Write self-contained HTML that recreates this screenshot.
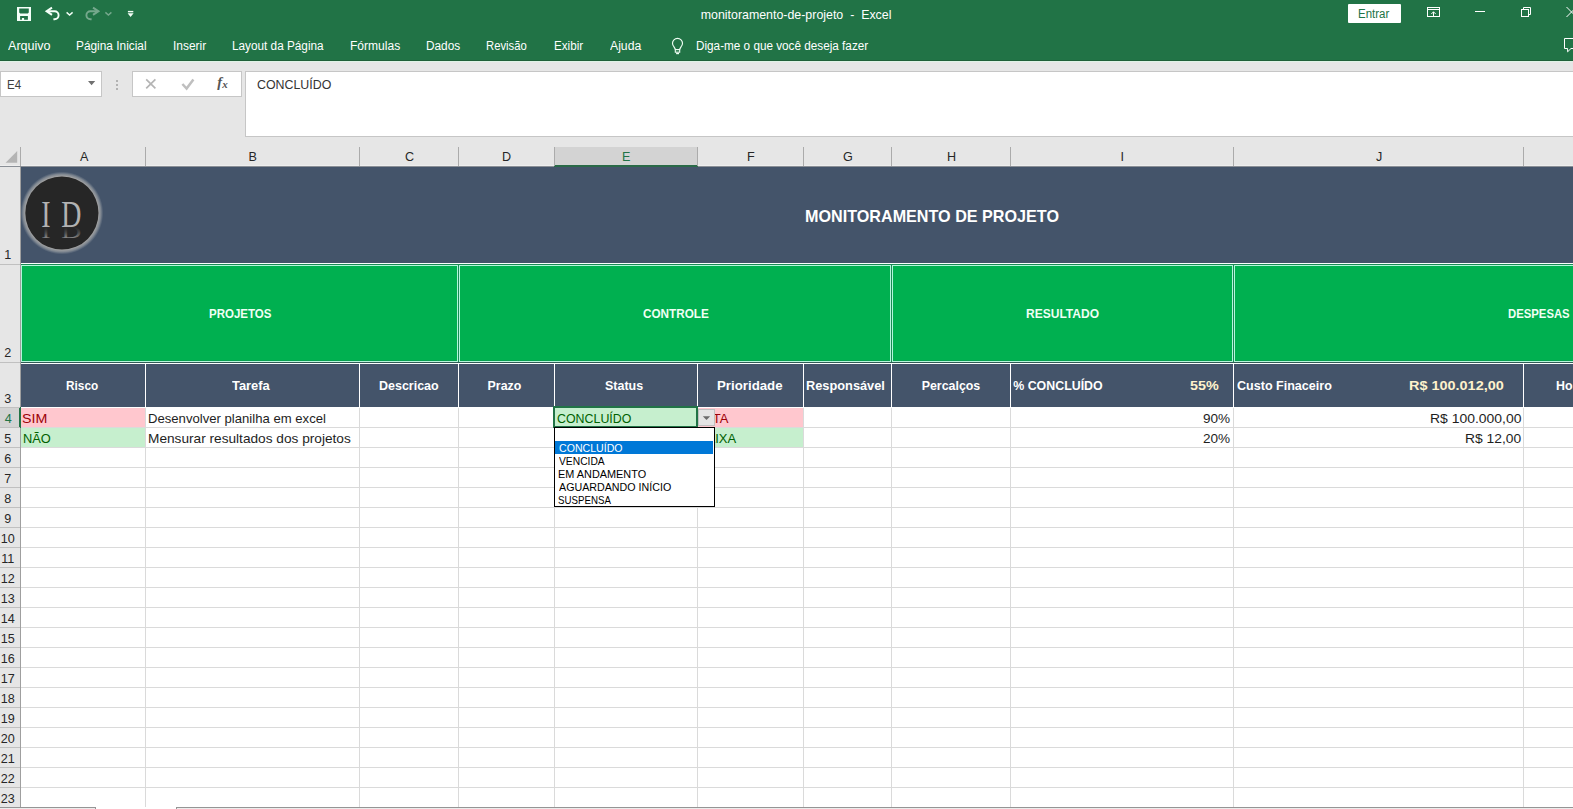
<!DOCTYPE html>
<html><head><meta charset="utf-8"><title>monitoramento-de-projeto - Excel</title>
<style>
html,body{margin:0;padding:0;width:1573px;height:809px;overflow:hidden;background:#fff;font-family:"Liberation Sans", sans-serif;}
body{position:relative;}
</style></head><body>
<div style="position:absolute;left:0px;top:0px;width:1573px;height:60px;background:#217346"></div><div style="position:absolute;left:0px;top:60px;width:1573px;height:1px;background:#1f6039"></div><div style="position:absolute;left:700.70px;top:8.90px;font-family:'Liberation Sans', sans-serif;font-size:12.4px;line-height:1;color:#fff;font-weight:400;font-style:normal;white-space:pre;">monitoramento-de-projeto  -  Excel</div><div style="position:absolute;left:1348px;top:4px;width:53px;height:19px;background:#fff;border-radius:1px"></div><div style="position:absolute;left:1358.44px;top:7.84px;font-family:'Liberation Sans', sans-serif;font-size:12px;line-height:1;color:#217346;font-weight:400;font-style:normal;white-space:pre;transform:scaleX(0.9562);transform-origin:0 0;">Entrar</div><div style="position:absolute;left:8.00px;top:39.79px;font-family:'Liberation Sans', sans-serif;font-size:12.3px;line-height:1;color:#fff;font-weight:400;font-style:normal;white-space:pre;transform:scaleX(1.0220);transform-origin:0 0;">Arquivo</div><div style="position:absolute;left:76.43px;top:39.79px;font-family:'Liberation Sans', sans-serif;font-size:12.3px;line-height:1;color:#fff;font-weight:400;font-style:normal;white-space:pre;transform:scaleX(0.9653);transform-origin:0 0;">Página Inicial</div><div style="position:absolute;left:173.03px;top:39.79px;font-family:'Liberation Sans', sans-serif;font-size:12.3px;line-height:1;color:#fff;font-weight:400;font-style:normal;white-space:pre;transform:scaleX(0.9697);transform-origin:0 0;">Inserir</div><div style="position:absolute;left:232.04px;top:39.79px;font-family:'Liberation Sans', sans-serif;font-size:12.3px;line-height:1;color:#fff;font-weight:400;font-style:normal;white-space:pre;transform:scaleX(0.9568);transform-origin:0 0;">Layout da Página</div><div style="position:absolute;left:350.02px;top:39.79px;font-family:'Liberation Sans', sans-serif;font-size:12.3px;line-height:1;color:#fff;font-weight:400;font-style:normal;white-space:pre;transform:scaleX(0.9800);transform-origin:0 0;">Fórmulas</div><div style="position:absolute;left:426.34px;top:39.79px;font-family:'Liberation Sans', sans-serif;font-size:12.3px;line-height:1;color:#fff;font-weight:400;font-style:normal;white-space:pre;transform:scaleX(0.9618);transform-origin:0 0;">Dados</div><div style="position:absolute;left:486.38px;top:39.79px;font-family:'Liberation Sans', sans-serif;font-size:12.3px;line-height:1;color:#fff;font-weight:400;font-style:normal;white-space:pre;transform:scaleX(0.9163);transform-origin:0 0;">Revisão</div><div style="position:absolute;left:553.55px;top:39.79px;font-family:'Liberation Sans', sans-serif;font-size:12.3px;line-height:1;color:#fff;font-weight:400;font-style:normal;white-space:pre;transform:scaleX(0.9467);transform-origin:0 0;">Exibir</div><div style="position:absolute;left:610.00px;top:39.79px;font-family:'Liberation Sans', sans-serif;font-size:12.3px;line-height:1;color:#fff;font-weight:400;font-style:normal;white-space:pre;transform:scaleX(0.9935);transform-origin:0 0;">Ajuda</div><div style="position:absolute;left:696.25px;top:39.79px;font-family:'Liberation Sans', sans-serif;font-size:12.3px;line-height:1;color:#fff;font-weight:400;font-style:normal;white-space:pre;transform:scaleX(0.9542);transform-origin:0 0;">Diga-me o que você deseja fazer</div><svg style="position:absolute;left:0;top:0" width="1573" height="60" viewBox="0 0 1573 60">
<path fill="#f4fff8" fill-rule="evenodd" d="M17 7 H31 V21 H17 Z M19.2 8.4 H28.8 V12.6 L27.8 13.6 H20.2 L19.2 12.6 Z M20.1 16 H27.9 V19.8 H24.1 V18 H21.9 V19.8 H20.1 Z"/>
<path d="M52 7.6 L46.6 11.2 L52 14.8" fill="none" stroke="#f4fff8" stroke-width="2" stroke-linejoin="miter"/>
<path d="M47.5 11.2 H54.6 A4 4 0 0 1 54.6 19.2 H53.4" fill="none" stroke="#f4fff8" stroke-width="1.9"/>
<path d="M66.6 12.4 L69.6 15 L72.6 12.4" fill="none" stroke="#f4fff8" stroke-width="1.4"/>
<g opacity="0.38">
<path d="M93 7.6 L98.4 11.2 L93 14.8" fill="none" stroke="#fff" stroke-width="2"/>
<path d="M97.5 11.2 H90.4 A4 4 0 0 0 90.4 19.2 H91.6" fill="none" stroke="#fff" stroke-width="1.9"/>
<path d="M105.4 12.4 L108.4 15 L111.4 12.4" fill="none" stroke="#fff" stroke-width="1.4"/>
</g>
<rect x="127.9" y="10.9" width="5.4" height="1.4" fill="#f4fff8"/>
<path d="M127.6 13.2 H133.6 L130.6 17 Z" fill="#f4fff8"/>
<rect x="1427.5" y="7.5" width="12" height="9" fill="none" stroke="#fff" stroke-width="1"/>
<path d="M1427.5 9.5 H1439.5" stroke="#fff" stroke-width="1"/>
<path d="M1433.5 16.5 V11.8 M1431.3 14 L1433.5 11.8 L1435.7 14" stroke="#fff" stroke-width="1" fill="none"/>
<path d="M1475 11.5 H1485" stroke="#fff" stroke-width="1"/>
<rect x="1521.5" y="9.5" width="7" height="7" fill="none" stroke="#fff" stroke-width="1"/>
<path d="M1523.5 9.5 V7.5 H1530.5 V14.5 H1528.5" fill="none" stroke="#fff" stroke-width="1"/>
<path d="M1566.5 7 L1576.5 17 M1576.5 7 L1566.5 17" stroke="#fff" stroke-width="1"/>
<path d="M1564.5 38.5 H1580 V48.5 H1571 L1567.6 51.8 V48.5 H1564.5 Z" fill="none" stroke="#fff" stroke-width="1"/>
<path d="M675.4 49.4 L674 46.9 A5 5 0 1 1 681 46.9 L679.6 49.4" fill="none" stroke="#f0fff5" stroke-width="1.15"/>
<rect x="675.3" y="49.6" width="4.4" height="2.6" fill="none" stroke="#f0fff5" stroke-width="1.1"/>
<rect x="676.1" y="53" width="2.9" height="1.2" fill="#f0fff5"/>
</svg><div style="position:absolute;left:0px;top:61px;width:1573px;height:106px;background:#e6e6e6"></div><div style="position:absolute;left:0px;top:61px;width:1573px;height:1px;background:#dff3e6"></div><div style="position:absolute;left:0px;top:71px;width:102px;height:26px;background:#fff;border:1px solid #c6c6c6;box-sizing:border-box"></div><div style="position:absolute;left:6.78px;top:78.62px;font-family:'Liberation Sans', sans-serif;font-size:12.5px;line-height:1;color:#404040;font-weight:400;font-style:normal;white-space:pre;transform:scaleX(0.9214);transform-origin:0 0;">E4</div><svg style="position:absolute;left:86px;top:80px" width="12" height="8"><path d="M2 1 H9.2 L5.6 5.2 Z" fill="#707070"/></svg><div style="position:absolute;left:116px;top:79.5px;width:2px;height:2px;background:#a0a0a0;border-radius:1px"></div><div style="position:absolute;left:116px;top:83.5px;width:2px;height:2px;background:#a0a0a0;border-radius:1px"></div><div style="position:absolute;left:116px;top:87.5px;width:2px;height:2px;background:#a0a0a0;border-radius:1px"></div><div style="position:absolute;left:132px;top:71px;width:110px;height:26px;background:#fff;border:1px solid #c6c6c6;box-sizing:border-box"></div><svg style="position:absolute;left:132px;top:71px" width="110" height="26"><path d="M14.2 8.4 L23.4 17.4 M23.4 8.4 L14.2 17.4" stroke="#b4b4b4" stroke-width="1.7" fill="none"/><path d="M50.4 13 L54.6 17.6 L61.4 8.4" stroke="#bfbfbf" stroke-width="2.5" fill="none"/></svg><div style="position:absolute;left:217.20px;top:75.33px;font-family:'Liberation Serif', serif;font-size:14.5px;line-height:1;color:#555;font-weight:400;font-style:italic;white-space:pre;"><b>f</b></div><div style="position:absolute;left:222.20px;top:78.69px;font-family:'Liberation Serif', serif;font-size:11px;line-height:1;color:#555;font-weight:400;font-style:italic;white-space:pre;"><b>x</b></div><div style="position:absolute;left:245px;top:71px;width:1330px;height:66px;background:#fff;border:1px solid #c6c6c6;box-sizing:border-box"></div><div style="position:absolute;left:256.58px;top:78.67px;font-family:'Liberation Sans', sans-serif;font-size:12.2px;line-height:1;color:#333;font-weight:400;font-style:normal;white-space:pre;transform:scaleX(1.0167);transform-origin:0 0;">CONCLUÍDO</div><svg style="position:absolute;left:0;top:140px" width="21" height="27"><path d="M5.6 22.7 L17.2 11 V22.7 Z" fill="#b4b4b4"/></svg><div style="position:absolute;left:0px;top:165px;width:1573px;height:1px;background:#eeeeee"></div><div style="position:absolute;left:0px;top:166px;width:1573px;height:1px;background:#8a8f96"></div><div style="position:absolute;left:554px;top:147px;width:144px;height:19px;background:#d3d3d3"></div><div style="position:absolute;left:554px;top:165px;width:144px;height:2px;background:#2a6a48"></div><div style="position:absolute;left:80.00px;top:151.03px;font-family:'Liberation Sans', sans-serif;font-size:12.6px;line-height:1;color:#262626;font-weight:400;font-style:normal;white-space:pre;">A</div><div style="position:absolute;left:248.50px;top:151.03px;font-family:'Liberation Sans', sans-serif;font-size:12.6px;line-height:1;color:#262626;font-weight:400;font-style:normal;white-space:pre;">B</div><div style="position:absolute;left:405.00px;top:151.03px;font-family:'Liberation Sans', sans-serif;font-size:12.6px;line-height:1;color:#262626;font-weight:400;font-style:normal;white-space:pre;">C</div><div style="position:absolute;left:502.00px;top:151.03px;font-family:'Liberation Sans', sans-serif;font-size:12.6px;line-height:1;color:#262626;font-weight:400;font-style:normal;white-space:pre;">D</div><div style="position:absolute;left:622.00px;top:151.03px;font-family:'Liberation Sans', sans-serif;font-size:12.6px;line-height:1;color:#217346;font-weight:400;font-style:normal;white-space:pre;">E</div><div style="position:absolute;left:747.00px;top:151.03px;font-family:'Liberation Sans', sans-serif;font-size:12.6px;line-height:1;color:#262626;font-weight:400;font-style:normal;white-space:pre;">F</div><div style="position:absolute;left:843.00px;top:151.03px;font-family:'Liberation Sans', sans-serif;font-size:12.6px;line-height:1;color:#262626;font-weight:400;font-style:normal;white-space:pre;">G</div><div style="position:absolute;left:947.00px;top:151.03px;font-family:'Liberation Sans', sans-serif;font-size:12.6px;line-height:1;color:#262626;font-weight:400;font-style:normal;white-space:pre;">H</div><div style="position:absolute;left:1120.50px;top:151.03px;font-family:'Liberation Sans', sans-serif;font-size:12.6px;line-height:1;color:#262626;font-weight:400;font-style:normal;white-space:pre;">I</div><div style="position:absolute;left:1376.00px;top:151.03px;font-family:'Liberation Sans', sans-serif;font-size:12.6px;line-height:1;color:#262626;font-weight:400;font-style:normal;white-space:pre;">J</div><div style="position:absolute;left:1608.00px;top:151.03px;font-family:'Liberation Sans', sans-serif;font-size:12.6px;line-height:1;color:#262626;font-weight:400;font-style:normal;white-space:pre;">K</div><div style="position:absolute;left:145px;top:147px;width:1px;height:19px;background:#ababab"></div><div style="position:absolute;left:359px;top:147px;width:1px;height:19px;background:#ababab"></div><div style="position:absolute;left:458px;top:147px;width:1px;height:19px;background:#ababab"></div><div style="position:absolute;left:554px;top:147px;width:1px;height:19px;background:#ababab"></div><div style="position:absolute;left:697px;top:147px;width:1px;height:19px;background:#ababab"></div><div style="position:absolute;left:803px;top:147px;width:1px;height:19px;background:#ababab"></div><div style="position:absolute;left:891px;top:147px;width:1px;height:19px;background:#ababab"></div><div style="position:absolute;left:1010px;top:147px;width:1px;height:19px;background:#ababab"></div><div style="position:absolute;left:1233px;top:147px;width:1px;height:19px;background:#ababab"></div><div style="position:absolute;left:1523px;top:147px;width:1px;height:19px;background:#ababab"></div><div style="position:absolute;left:20px;top:147px;width:1px;height:19px;background:#ababab"></div><div style="position:absolute;left:0px;top:167px;width:20px;height:640px;background:#e6e6e6"></div><div style="position:absolute;left:20px;top:167px;width:1px;height:640px;background:#9f9f9f"></div><div style="position:absolute;left:0px;top:408px;width:19px;height:19px;background:#d3d3d3"></div><div style="position:absolute;left:19px;top:407px;width:2px;height:21px;background:#217346"></div><div style="position:absolute;left:0px;top:264px;width:20px;height:1px;background:#c0c0c0"></div><div style="position:absolute;left:4.30px;top:249.13px;font-family:'Liberation Sans', sans-serif;font-size:12.6px;line-height:1;color:#262626;font-weight:400;font-style:normal;white-space:pre;">1</div><div style="position:absolute;left:0px;top:362px;width:20px;height:1px;background:#c0c0c0"></div><div style="position:absolute;left:4.30px;top:347.13px;font-family:'Liberation Sans', sans-serif;font-size:12.6px;line-height:1;color:#262626;font-weight:400;font-style:normal;white-space:pre;">2</div><div style="position:absolute;left:0px;top:407px;width:20px;height:1px;background:#c0c0c0"></div><div style="position:absolute;left:4.30px;top:393.13px;font-family:'Liberation Sans', sans-serif;font-size:12.6px;line-height:1;color:#262626;font-weight:400;font-style:normal;white-space:pre;">3</div><div style="position:absolute;left:0px;top:427px;width:20px;height:1px;background:#c0c0c0"></div><div style="position:absolute;left:4.80px;top:413.13px;font-family:'Liberation Sans', sans-serif;font-size:12.6px;line-height:1;color:#217346;font-weight:400;font-style:normal;white-space:pre;">4</div><div style="position:absolute;left:0px;top:447px;width:20px;height:1px;background:#c0c0c0"></div><div style="position:absolute;left:4.30px;top:433.13px;font-family:'Liberation Sans', sans-serif;font-size:12.6px;line-height:1;color:#262626;font-weight:400;font-style:normal;white-space:pre;">5</div><div style="position:absolute;left:0px;top:467px;width:20px;height:1px;background:#c0c0c0"></div><div style="position:absolute;left:4.30px;top:453.13px;font-family:'Liberation Sans', sans-serif;font-size:12.6px;line-height:1;color:#262626;font-weight:400;font-style:normal;white-space:pre;">6</div><div style="position:absolute;left:0px;top:487px;width:20px;height:1px;background:#c0c0c0"></div><div style="position:absolute;left:4.30px;top:473.13px;font-family:'Liberation Sans', sans-serif;font-size:12.6px;line-height:1;color:#262626;font-weight:400;font-style:normal;white-space:pre;">7</div><div style="position:absolute;left:0px;top:507px;width:20px;height:1px;background:#c0c0c0"></div><div style="position:absolute;left:4.30px;top:493.13px;font-family:'Liberation Sans', sans-serif;font-size:12.6px;line-height:1;color:#262626;font-weight:400;font-style:normal;white-space:pre;">8</div><div style="position:absolute;left:0px;top:527px;width:20px;height:1px;background:#c0c0c0"></div><div style="position:absolute;left:4.30px;top:513.13px;font-family:'Liberation Sans', sans-serif;font-size:12.6px;line-height:1;color:#262626;font-weight:400;font-style:normal;white-space:pre;">9</div><div style="position:absolute;left:0px;top:547px;width:20px;height:1px;background:#c0c0c0"></div><div style="position:absolute;left:0.80px;top:533.13px;font-family:'Liberation Sans', sans-serif;font-size:12.6px;line-height:1;color:#262626;font-weight:400;font-style:normal;white-space:pre;">10</div><div style="position:absolute;left:0px;top:567px;width:20px;height:1px;background:#c0c0c0"></div><div style="position:absolute;left:1.30px;top:553.13px;font-family:'Liberation Sans', sans-serif;font-size:12.6px;line-height:1;color:#262626;font-weight:400;font-style:normal;white-space:pre;">11</div><div style="position:absolute;left:0px;top:587px;width:20px;height:1px;background:#c0c0c0"></div><div style="position:absolute;left:0.80px;top:573.13px;font-family:'Liberation Sans', sans-serif;font-size:12.6px;line-height:1;color:#262626;font-weight:400;font-style:normal;white-space:pre;">12</div><div style="position:absolute;left:0px;top:607px;width:20px;height:1px;background:#c0c0c0"></div><div style="position:absolute;left:0.80px;top:593.13px;font-family:'Liberation Sans', sans-serif;font-size:12.6px;line-height:1;color:#262626;font-weight:400;font-style:normal;white-space:pre;">13</div><div style="position:absolute;left:0px;top:627px;width:20px;height:1px;background:#c0c0c0"></div><div style="position:absolute;left:0.80px;top:613.13px;font-family:'Liberation Sans', sans-serif;font-size:12.6px;line-height:1;color:#262626;font-weight:400;font-style:normal;white-space:pre;">14</div><div style="position:absolute;left:0px;top:647px;width:20px;height:1px;background:#c0c0c0"></div><div style="position:absolute;left:0.80px;top:633.13px;font-family:'Liberation Sans', sans-serif;font-size:12.6px;line-height:1;color:#262626;font-weight:400;font-style:normal;white-space:pre;">15</div><div style="position:absolute;left:0px;top:667px;width:20px;height:1px;background:#c0c0c0"></div><div style="position:absolute;left:0.80px;top:653.13px;font-family:'Liberation Sans', sans-serif;font-size:12.6px;line-height:1;color:#262626;font-weight:400;font-style:normal;white-space:pre;">16</div><div style="position:absolute;left:0px;top:687px;width:20px;height:1px;background:#c0c0c0"></div><div style="position:absolute;left:0.80px;top:673.13px;font-family:'Liberation Sans', sans-serif;font-size:12.6px;line-height:1;color:#262626;font-weight:400;font-style:normal;white-space:pre;">17</div><div style="position:absolute;left:0px;top:707px;width:20px;height:1px;background:#c0c0c0"></div><div style="position:absolute;left:0.80px;top:693.13px;font-family:'Liberation Sans', sans-serif;font-size:12.6px;line-height:1;color:#262626;font-weight:400;font-style:normal;white-space:pre;">18</div><div style="position:absolute;left:0px;top:727px;width:20px;height:1px;background:#c0c0c0"></div><div style="position:absolute;left:0.80px;top:713.13px;font-family:'Liberation Sans', sans-serif;font-size:12.6px;line-height:1;color:#262626;font-weight:400;font-style:normal;white-space:pre;">19</div><div style="position:absolute;left:0px;top:747px;width:20px;height:1px;background:#c0c0c0"></div><div style="position:absolute;left:0.80px;top:733.13px;font-family:'Liberation Sans', sans-serif;font-size:12.6px;line-height:1;color:#262626;font-weight:400;font-style:normal;white-space:pre;">20</div><div style="position:absolute;left:0px;top:767px;width:20px;height:1px;background:#c0c0c0"></div><div style="position:absolute;left:0.80px;top:753.13px;font-family:'Liberation Sans', sans-serif;font-size:12.6px;line-height:1;color:#262626;font-weight:400;font-style:normal;white-space:pre;">21</div><div style="position:absolute;left:0px;top:787px;width:20px;height:1px;background:#c0c0c0"></div><div style="position:absolute;left:0.80px;top:773.13px;font-family:'Liberation Sans', sans-serif;font-size:12.6px;line-height:1;color:#262626;font-weight:400;font-style:normal;white-space:pre;">22</div><div style="position:absolute;left:0px;top:807px;width:20px;height:1px;background:#c0c0c0"></div><div style="position:absolute;left:0.80px;top:793.13px;font-family:'Liberation Sans', sans-serif;font-size:12.6px;line-height:1;color:#262626;font-weight:400;font-style:normal;white-space:pre;">23</div><div style="position:absolute;left:21px;top:167px;width:1552px;height:640px;background:#fff"></div><div style="position:absolute;left:21px;top:427px;width:1552px;height:1px;background:#dadada"></div><div style="position:absolute;left:21px;top:447px;width:1552px;height:1px;background:#dadada"></div><div style="position:absolute;left:21px;top:467px;width:1552px;height:1px;background:#dadada"></div><div style="position:absolute;left:21px;top:487px;width:1552px;height:1px;background:#dadada"></div><div style="position:absolute;left:21px;top:507px;width:1552px;height:1px;background:#dadada"></div><div style="position:absolute;left:21px;top:527px;width:1552px;height:1px;background:#dadada"></div><div style="position:absolute;left:21px;top:547px;width:1552px;height:1px;background:#dadada"></div><div style="position:absolute;left:21px;top:567px;width:1552px;height:1px;background:#dadada"></div><div style="position:absolute;left:21px;top:587px;width:1552px;height:1px;background:#dadada"></div><div style="position:absolute;left:21px;top:607px;width:1552px;height:1px;background:#dadada"></div><div style="position:absolute;left:21px;top:627px;width:1552px;height:1px;background:#dadada"></div><div style="position:absolute;left:21px;top:647px;width:1552px;height:1px;background:#dadada"></div><div style="position:absolute;left:21px;top:667px;width:1552px;height:1px;background:#dadada"></div><div style="position:absolute;left:21px;top:687px;width:1552px;height:1px;background:#dadada"></div><div style="position:absolute;left:21px;top:707px;width:1552px;height:1px;background:#dadada"></div><div style="position:absolute;left:21px;top:727px;width:1552px;height:1px;background:#dadada"></div><div style="position:absolute;left:21px;top:747px;width:1552px;height:1px;background:#dadada"></div><div style="position:absolute;left:21px;top:767px;width:1552px;height:1px;background:#dadada"></div><div style="position:absolute;left:21px;top:787px;width:1552px;height:1px;background:#dadada"></div><div style="position:absolute;left:21px;top:807px;width:1552px;height:1px;background:#dadada"></div><div style="position:absolute;left:145px;top:407px;width:1px;height:400px;background:#dadada"></div><div style="position:absolute;left:359px;top:407px;width:1px;height:400px;background:#dadada"></div><div style="position:absolute;left:458px;top:407px;width:1px;height:400px;background:#dadada"></div><div style="position:absolute;left:554px;top:407px;width:1px;height:400px;background:#dadada"></div><div style="position:absolute;left:697px;top:407px;width:1px;height:400px;background:#dadada"></div><div style="position:absolute;left:803px;top:407px;width:1px;height:400px;background:#dadada"></div><div style="position:absolute;left:891px;top:407px;width:1px;height:400px;background:#dadada"></div><div style="position:absolute;left:1010px;top:407px;width:1px;height:400px;background:#dadada"></div><div style="position:absolute;left:1233px;top:407px;width:1px;height:400px;background:#dadada"></div><div style="position:absolute;left:1523px;top:407px;width:1px;height:400px;background:#dadada"></div><div style="position:absolute;left:21px;top:167px;width:1552px;height:96px;background:#44546a"></div><div style="position:absolute;left:804.75px;top:207.81px;font-family:'Liberation Sans', sans-serif;font-size:17px;line-height:1;color:#fff;font-weight:700;font-style:normal;white-space:pre;transform:scaleX(0.9500);transform-origin:0 0;">MONITORAMENTO DE PROJETO</div><svg style="position:absolute;left:21px;top:167px" width="84" height="96">
<defs>
<radialGradient id="glow" cx="50%" cy="50%" r="50%">
<stop offset="88%" stop-color="#a4a4a4" stop-opacity="1"/>
<stop offset="94%" stop-color="#90969c" stop-opacity="0.75"/>
<stop offset="100%" stop-color="#7a8593" stop-opacity="0"/></radialGradient>
<linearGradient id="refl" x1="0" y1="0" x2="0" y2="1"><stop offset="0" stop-color="#b0b0b0"/><stop offset="0.9" stop-color="#262626" stop-opacity="0"/></linearGradient>
</defs>
<circle cx="40.9" cy="46" r="41.5" fill="url(#glow)"/>
<circle cx="40.9" cy="46" r="36.6" fill="#262626"/>
<g transform="translate(0,59.5) scale(0.745,1)">
<text x="27.2" y="0" font-family="Liberation Serif" font-size="37.5" fill="#b2b2b2">I</text>
<text x="54.2" y="0" font-family="Liberation Serif" font-size="37.5" fill="#b2b2b2">D</text>
</g>
<g transform="translate(0,59.5) scale(0.745,-0.42)">
<text x="27.2" y="0" font-family="Liberation Serif" font-size="37.5" fill="url(#refl)">I</text>
<text x="54.2" y="0" font-family="Liberation Serif" font-size="37.5" fill="url(#refl)">D</text>
</g>
</svg><div style="position:absolute;left:21px;top:263px;width:1552px;height:101px;background:#fbfffd"></div><div style="position:absolute;left:21px;top:264px;width:438px;height:99px;background:#1b8a55"></div><div style="position:absolute;left:21px;top:265px;width:437px;height:97px;background:#b4f6dc"></div><div style="position:absolute;left:22px;top:266px;width:435px;height:95px;background:#00b050"></div><div style="position:absolute;left:22px;top:360px;width:435px;height:1px;background:#06a04e"></div><div style="position:absolute;left:208.76px;top:307.57px;font-family:'Liberation Sans', sans-serif;font-size:12.2px;line-height:1;color:#effff4;font-weight:700;font-style:normal;white-space:pre;transform:scaleX(0.9446);transform-origin:0 0;">PROJETOS</div><div style="position:absolute;left:458px;top:264px;width:434px;height:99px;background:#1b8a55"></div><div style="position:absolute;left:459px;top:265px;width:432px;height:97px;background:#b4f6dc"></div><div style="position:absolute;left:460px;top:266px;width:430px;height:95px;background:#00b050"></div><div style="position:absolute;left:460px;top:360px;width:430px;height:1px;background:#06a04e"></div><div style="position:absolute;left:642.60px;top:307.57px;font-family:'Liberation Sans', sans-serif;font-size:12.2px;line-height:1;color:#effff4;font-weight:700;font-style:normal;white-space:pre;transform:scaleX(0.9618);transform-origin:0 0;">CONTROLE</div><div style="position:absolute;left:891px;top:264px;width:343px;height:99px;background:#1b8a55"></div><div style="position:absolute;left:892px;top:265px;width:341px;height:97px;background:#b4f6dc"></div><div style="position:absolute;left:893px;top:266px;width:339px;height:95px;background:#00b050"></div><div style="position:absolute;left:893px;top:360px;width:339px;height:1px;background:#06a04e"></div><div style="position:absolute;left:1025.71px;top:307.57px;font-family:'Liberation Sans', sans-serif;font-size:12.2px;line-height:1;color:#effff4;font-weight:700;font-style:normal;white-space:pre;transform:scaleX(0.9863);transform-origin:0 0;">RESULTADO</div><div style="position:absolute;left:1233px;top:264px;width:611px;height:99px;background:#1b8a55"></div><div style="position:absolute;left:1234px;top:265px;width:609px;height:97px;background:#b4f6dc"></div><div style="position:absolute;left:1235px;top:266px;width:607px;height:95px;background:#00b050"></div><div style="position:absolute;left:1235px;top:360px;width:607px;height:1px;background:#06a04e"></div><div style="position:absolute;left:1507.67px;top:307.57px;font-family:'Liberation Sans', sans-serif;font-size:12.2px;line-height:1;color:#effff4;font-weight:700;font-style:normal;white-space:pre;transform:scaleX(0.9292);transform-origin:0 0;">DESPESAS</div><div style="position:absolute;left:21px;top:362px;width:1552px;height:1px;background:#2f5a55"></div><div style="position:absolute;left:21px;top:363px;width:1552px;height:1px;background:#fbfffd"></div><div style="position:absolute;left:21px;top:364px;width:1552px;height:43px;background:#44546a"></div><div style="position:absolute;left:145px;top:363px;width:1px;height:44px;background:#fff"></div><div style="position:absolute;left:359px;top:363px;width:1px;height:44px;background:#fff"></div><div style="position:absolute;left:458px;top:363px;width:1px;height:44px;background:#fff"></div><div style="position:absolute;left:554px;top:363px;width:1px;height:44px;background:#fff"></div><div style="position:absolute;left:697px;top:363px;width:1px;height:44px;background:#fff"></div><div style="position:absolute;left:803px;top:363px;width:1px;height:44px;background:#fff"></div><div style="position:absolute;left:891px;top:363px;width:1px;height:44px;background:#fff"></div><div style="position:absolute;left:1010px;top:363px;width:1px;height:44px;background:#fff"></div><div style="position:absolute;left:1233px;top:363px;width:1px;height:44px;background:#fff"></div><div style="position:absolute;left:1523px;top:363px;width:1px;height:44px;background:#fff"></div><div style="position:absolute;left:21px;top:407px;width:1552px;height:1px;background:#fff"></div><div style="position:absolute;left:66.45px;top:379.60px;font-family:'Liberation Sans', sans-serif;font-size:12.4px;line-height:1;color:#fff;font-weight:700;font-style:normal;white-space:pre;transform:scaleX(0.9545);transform-origin:0 0;">Risco</div><div style="position:absolute;left:232.10px;top:379.60px;font-family:'Liberation Sans', sans-serif;font-size:12.4px;line-height:1;color:#fff;font-weight:700;font-style:normal;white-space:pre;transform:scaleX(1.0405);transform-origin:0 0;">Tarefa</div><div style="position:absolute;left:379.49px;top:379.60px;font-family:'Liberation Sans', sans-serif;font-size:12.4px;line-height:1;color:#fff;font-weight:700;font-style:normal;white-space:pre;transform:scaleX(1.0069);transform-origin:0 0;">Descricao</div><div style="position:absolute;left:487.60px;top:379.60px;font-family:'Liberation Sans', sans-serif;font-size:12.4px;line-height:1;color:#fff;font-weight:700;font-style:normal;white-space:pre;">Prazo</div><div style="position:absolute;left:605.39px;top:379.60px;font-family:'Liberation Sans', sans-serif;font-size:12.4px;line-height:1;color:#fff;font-weight:700;font-style:normal;white-space:pre;transform:scaleX(1.0054);transform-origin:0 0;">Status</div><div style="position:absolute;left:717.33px;top:379.60px;font-family:'Liberation Sans', sans-serif;font-size:12.4px;line-height:1;color:#fff;font-weight:700;font-style:normal;white-space:pre;transform:scaleX(1.0700);transform-origin:0 0;">Prioridade</div><div style="position:absolute;left:806.37px;top:379.60px;font-family:'Liberation Sans', sans-serif;font-size:12.4px;line-height:1;color:#fff;font-weight:700;font-style:normal;white-space:pre;transform:scaleX(1.0320);transform-origin:0 0;">Responsável</div><div style="position:absolute;left:921.70px;top:379.60px;font-family:'Liberation Sans', sans-serif;font-size:12.4px;line-height:1;color:#fff;font-weight:700;font-style:normal;white-space:pre;">Percalços</div><div style="position:absolute;left:1013.20px;top:379.60px;font-family:'Liberation Sans', sans-serif;font-size:12.4px;line-height:1;color:#fff;font-weight:700;font-style:normal;white-space:pre;">% CONCLUÍDO</div><div style="position:absolute;left:1236.50px;top:379.60px;font-family:'Liberation Sans', sans-serif;font-size:12.4px;line-height:1;color:#fff;font-weight:700;font-style:normal;white-space:pre;transform:scaleX(1.0129);transform-origin:0 0;">Custo Finaceiro</div><div style="position:absolute;left:1189.61px;top:378.93px;font-family:'Liberation Sans', sans-serif;font-size:13.2px;line-height:1;color:#fff2cc;font-weight:700;font-style:normal;white-space:pre;transform:scaleX(1.0880);transform-origin:0 0;">55%</div><div style="position:absolute;left:1408.80px;top:379.03px;font-family:'Liberation Sans', sans-serif;font-size:13.2px;line-height:1;color:#fff2cc;font-weight:700;font-style:normal;white-space:pre;transform:scaleX(1.0953);transform-origin:0 0;">R$ 100.012,00</div><div style="position:absolute;left:1556.00px;top:379.60px;font-family:'Liberation Sans', sans-serif;font-size:12.4px;line-height:1;color:#fff;font-weight:700;font-style:normal;white-space:pre;">Ho</div><div style="position:absolute;left:21px;top:408px;width:124px;height:19px;background:#ffc7ce"></div><div style="position:absolute;left:21px;top:428px;width:124px;height:19px;background:#c6efce"></div><div style="position:absolute;left:22.30px;top:411.80px;font-family:'Liberation Sans', sans-serif;font-size:13px;line-height:1;color:#9c0006;font-weight:400;font-style:normal;white-space:pre;transform:scaleX(1.0952);transform-origin:0 0;">SIM</div><div style="position:absolute;left:22.71px;top:431.80px;font-family:'Liberation Sans', sans-serif;font-size:13px;line-height:1;color:#006100;font-weight:400;font-style:normal;white-space:pre;transform:scaleX(0.9889);transform-origin:0 0;">NÃO</div><div style="position:absolute;left:147.69px;top:411.90px;font-family:'Liberation Sans', sans-serif;font-size:13px;line-height:1;color:#1e1e1e;font-weight:400;font-style:normal;white-space:pre;transform:scaleX(1.0091);transform-origin:0 0;">Desenvolver planilha em excel</div><div style="position:absolute;left:147.65px;top:431.90px;font-family:'Liberation Sans', sans-serif;font-size:13px;line-height:1;color:#1e1e1e;font-weight:400;font-style:normal;white-space:pre;transform:scaleX(1.0510);transform-origin:0 0;">Mensurar resultados dos projetos</div><div style="position:absolute;left:554px;top:408px;width:143px;height:19px;background:#c6efce"></div><div style="position:absolute;left:556.95px;top:412.10px;font-family:'Liberation Sans', sans-serif;font-size:13px;line-height:1;color:#006100;font-weight:400;font-style:normal;white-space:pre;transform:scaleX(0.9532);transform-origin:0 0;">CONCLUÍDO</div><div style="position:absolute;left:698px;top:408px;width:105px;height:19px;background:#ffc7ce"></div><div style="position:absolute;left:698px;top:428px;width:105px;height:19px;background:#c6efce"></div><div style="position:absolute;left:697.90px;top:411.80px;font-family:'Liberation Sans', sans-serif;font-size:13px;line-height:1;color:#9c0006;font-weight:400;font-style:normal;white-space:pre;">ALTA</div><div style="position:absolute;left:697.80px;top:431.80px;font-family:'Liberation Sans', sans-serif;font-size:13px;line-height:1;color:#006100;font-weight:400;font-style:normal;white-space:pre;">BAIXA</div><div style="position:absolute;left:1203.06px;top:411.90px;font-family:'Liberation Sans', sans-serif;font-size:13px;line-height:1;color:#1e1e1e;font-weight:400;font-style:normal;white-space:pre;transform:scaleX(1.0440);transform-origin:0 0;">90%</div><div style="position:absolute;left:1203.06px;top:431.90px;font-family:'Liberation Sans', sans-serif;font-size:13px;line-height:1;color:#1e1e1e;font-weight:400;font-style:normal;white-space:pre;transform:scaleX(1.0440);transform-origin:0 0;">20%</div><div style="position:absolute;left:1429.53px;top:411.90px;font-family:'Liberation Sans', sans-serif;font-size:13px;line-height:1;color:#1e1e1e;font-weight:400;font-style:normal;white-space:pre;transform:scaleX(1.0726);transform-origin:0 0;">R$ 100.000,00</div><div style="position:absolute;left:1465.34px;top:431.90px;font-family:'Liberation Sans', sans-serif;font-size:13px;line-height:1;color:#1e1e1e;font-weight:400;font-style:normal;white-space:pre;transform:scaleX(1.0647);transform-origin:0 0;">R$ 12,00</div><div style="position:absolute;left:553px;top:406px;width:145px;height:22px;border:2px solid #217346;box-sizing:border-box"></div><div style="position:absolute;left:698px;top:409px;width:17px;height:17px;background:#e4e4e4;border:1px solid #c0c0c0;box-sizing:border-box"></div><svg style="position:absolute;left:698px;top:409px" width="17" height="17"><path d="M4.8 7.2 H12.2 L8.5 11 Z" fill="#6b6b6b"/></svg><div style="position:absolute;left:554px;top:427px;width:161px;height:80px;background:#fff;border:1px solid #000;box-sizing:border-box"></div><div style="position:absolute;left:555px;top:441px;width:158px;height:13px;background:#0078d7"></div><div style="position:absolute;left:559.30px;top:444.00px;font-family:'Liberation Sans', sans-serif;font-size:10.4px;line-height:1;color:#fff;font-weight:400;font-style:normal;white-space:pre;transform:scaleX(1.0194);transform-origin:0 0;">CONCLUÍDO</div><div style="position:absolute;left:559.30px;top:456.90px;font-family:'Liberation Sans', sans-serif;font-size:10.4px;line-height:1;color:#000;font-weight:400;font-style:normal;white-space:pre;transform:scaleX(0.9891);transform-origin:0 0;">VENCIDA</div><div style="position:absolute;left:558.25px;top:469.80px;font-family:'Liberation Sans', sans-serif;font-size:10.4px;line-height:1;color:#000;font-weight:400;font-style:normal;white-space:pre;transform:scaleX(1.0482);transform-origin:0 0;">EM ANDAMENTO</div><div style="position:absolute;left:559.30px;top:482.70px;font-family:'Liberation Sans', sans-serif;font-size:10.4px;line-height:1;color:#000;font-weight:400;font-style:normal;white-space:pre;transform:scaleX(1.0284);transform-origin:0 0;">AGUARDANDO INÍCIO</div><div style="position:absolute;left:558.37px;top:495.60px;font-family:'Liberation Sans', sans-serif;font-size:10.4px;line-height:1;color:#000;font-weight:400;font-style:normal;white-space:pre;transform:scaleX(0.9339);transform-origin:0 0;">SUSPENSA</div><div style="position:absolute;left:0px;top:807px;width:96px;height:1px;background:#959595"></div><div style="position:absolute;left:0px;top:808px;width:95px;height:1px;background:#ececec"></div><div style="position:absolute;left:95px;top:807px;width:1px;height:2px;background:#959595"></div><div style="position:absolute;left:176px;top:807px;width:1397px;height:1px;background:#959595"></div><div style="position:absolute;left:176px;top:808px;width:1px;height:1px;background:#959595"></div><div style="position:absolute;left:177px;top:808px;width:1396px;height:1px;background:#ececec"></div><div style="position:absolute;left:96px;top:807px;width:80px;height:2px;background:#fff"></div>
</body></html>
